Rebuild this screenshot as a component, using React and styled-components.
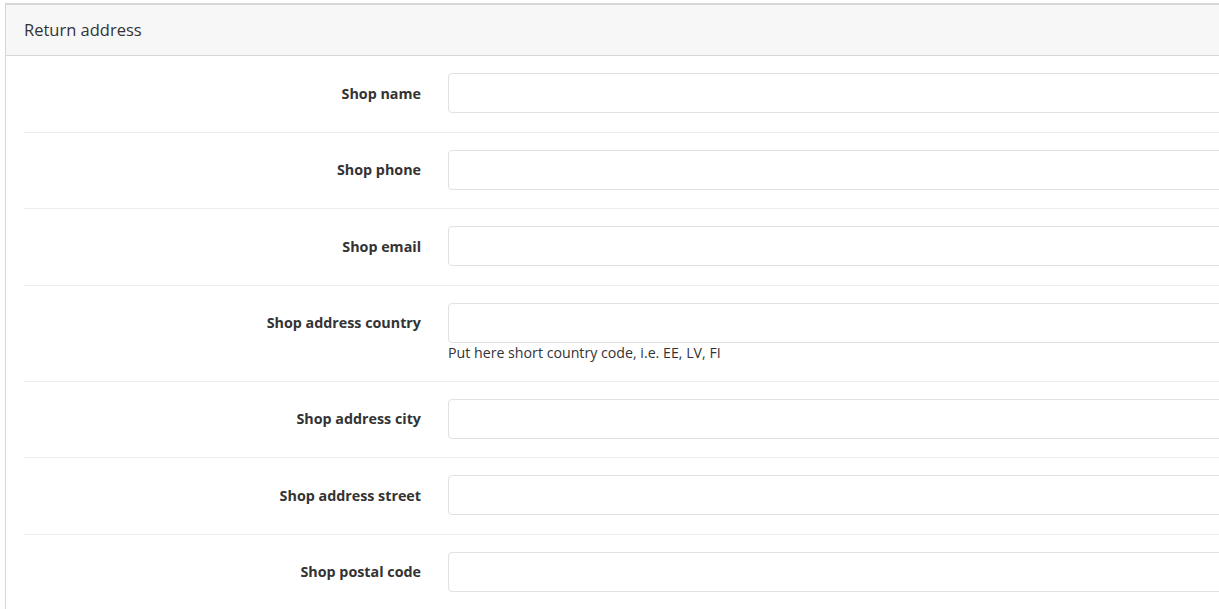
import styled, { createGlobalStyle } from "styled-components";

const fields = [
  { label: "Shop name" },
  { label: "Shop phone" },
  { label: "Shop email" },
  { label: "Shop address country", help: "Put here short country code, i.e. EE, LV, FI" },
  { label: "Shop address city" },
  { label: "Shop address street" },
  { label: "Shop postal code" },
];

export default function App() {
  return (
    <>
      <GlobalStyle />
      <Panel>
        <PanelHeading>Return address</PanelHeading>
        <PanelBody>
          {fields.map((f) => (
            <FormRow key={f.label}>
              <Label>{f.label}</Label>
              <Field>
                <Input type="text" />
                {f.help && <Help>{f.help}</Help>}
              </Field>
            </FormRow>
          ))}
        </PanelBody>
      </Panel>
    </>
  );
}

const GlobalStyle = createGlobalStyle`
  html, body {
    margin: 0;
    background: #fff;
    overflow: hidden;
  }
  body {
    padding: 3px 0 0 5px;
    font-family: "Open Sans", "Liberation Sans", sans-serif;
    color: #333;
  }
`;

const Panel = styled.section`
  width: 1260px;
  border: 1px solid #d6d6d6;
  border-top-width: 2px;
  background: #fff;
`;

const PanelHeading = styled.div`
  box-sizing: border-box;
  height: 51px;
  display: flex;
  align-items: center;
  padding: 0 18px 1px;
  background: #f7f7f7;
  border-bottom: 1px solid #d6d6d6;
  font-size: 16.5px;
  color: #333;
`;

const PanelBody = styled.div`
  padding: 0 0 0 18px;
`;

const FormRow = styled.div`
  display: grid;
  grid-template-columns: 397px 1fr;
  column-gap: 27px;
  padding: 17px 0 18.5px;
  border-bottom: 1px solid #eee;
  &:last-child {
    border-bottom: none;
  }
`;

const Label = styled.label`
  height: 40px;
  display: flex;
  align-items: center;
  justify-content: flex-end;
  font-size: 14.3px;
  font-weight: 700;
  color: #333;
`;

const Field = styled.div`
  display: flex;
  flex-direction: column;
`;

const Input = styled.input`
  box-sizing: border-box;
  height: 40px;
  width: 100%;
  border: 1px solid #e0e0e6;
  border-radius: 4px;
  background: #fff;
  padding: 0 12px;
  font: inherit;
  outline: none;
`;

const Help = styled.span`
  font-size: 14.2px;
  line-height: 19.5px;
  color: #333;
`;
